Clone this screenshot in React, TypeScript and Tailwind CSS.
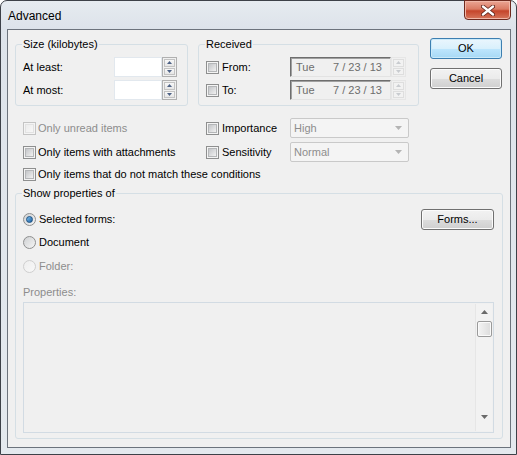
import clsx from "clsx";

const font = "font-['Liberation_Sans',Arial,sans-serif]";

function Check({ disabled }: { disabled?: boolean }) {
  return (
    <span
      className={clsx(
        "inline-block h-[13px] w-[13px] shrink-0 border p-[1px]",
        disabled ? "border-[#c4c4c4] bg-[#f4f4f4]" : "border-[#8e8f8f] bg-[#f4f4f4]"
      )}
    >
      <span
        className={clsx(
          "block h-full w-full border bg-gradient-to-br",
          disabled
            ? "border-[#e2e2e2] from-[#ececec] to-[#f7f7f7]"
            : "border-[#b4b6b8] from-[#c4c6c9] to-[#f1f1f1]"
        )}
      />
    </span>
  );
}

function Radio({ checked, disabled }: { checked?: boolean; disabled?: boolean }) {
  return (
    <span
      className={clsx(
        "flex h-[13px] w-[13px] shrink-0 items-center justify-center rounded-full border bg-gradient-to-br",
        disabled
          ? "border-[#cfcfcf] from-[#eeeeee] to-[#f8f8f8]"
          : "border-[#8e8f8f] from-[#cfd1d3] to-[#f5f5f5]"
      )}
    >
      {checked && (
        <span className="block h-[7px] w-[7px] rounded-full border border-[#1b4f80] bg-gradient-to-br from-[#7dc0ef] to-[#175fa0]" />
      )}
    </span>
  );
}

function Arrow({ up, color, size = 7 }: { up?: boolean; color: string; size?: number }) {
  const h = size === 7 ? 4 : 3;
  return (
    <svg width={size} height={h} viewBox={`0 0 ${size} ${h}`}>
      <path
        d={up ? `M0 ${h} L${size / 2} 0 L${size} ${h} Z` : `M0 0 L${size / 2} ${h} L${size} 0 Z`}
        fill={color}
      />
    </svg>
  );
}

function Spin({ disabled }: { disabled?: boolean }) {
  const c = disabled ? "#c8cbcf" : "#4d6185";
  const btn = clsx(
    "flex flex-1 items-center justify-center border",
    disabled
      ? "border-[#dedede] bg-[#f2f2f2]"
      : "border-[#c3c3c3] bg-gradient-to-b from-[#f8f8f8] to-[#e6e6e6]"
  );
  return (
    <div className={clsx("flex h-[20px] w-[15px] flex-col gap-[1px] border p-[1px]", disabled ? "border-[#e6e6e6]" : "border-[#b0b0b0]")}>
      <div className={btn}>
        <Arrow up color={c} size={5} />
      </div>
      <div className={btn}>
        <Arrow color={c} size={5} />
      </div>
    </div>
  );
}

function Group({ label, className, children }: { label: string; className: string; children: React.ReactNode }) {
  return (
    <div className={clsx("relative rounded-[3px] border border-[#d5dfe5]", className)}>
      <span className="absolute -top-[8px] left-[6px] bg-[#f0f0f0] px-[1px] text-[11px] leading-[14px] text-black">
        {label}
      </span>
      {children}
    </div>
  );
}

function Button({ label, primary, className }: { label: string; primary?: boolean; className?: string }) {
  return (
    <div
      className={clsx(
        "flex h-[21px] items-center justify-center rounded-[3px] border text-[11px] text-black",
        primary
          ? "border-[#3c7fb1] bg-[linear-gradient(#eaf6fd_0%,#d9f0fc_50%,#bee6fd_51%,#a7d9f5_100%)] shadow-[inset_0_0_0_1px_#cbeaf9]"
          : "border-[#707070] bg-[linear-gradient(#f2f2f2_0%,#ebebeb_50%,#dddddd_51%,#cfcfcf_100%)] shadow-[inset_0_0_0_1px_#fbfbfb]",
        className
      )}
    >
      {label}
    </div>
  );
}

function DateField() {
  return (
    <div className="flex items-center">
      <div className="flex h-[20px] w-[101px] items-center border border-b-[#e3e3e3] border-l-[#6e6e6e] border-r-[#e3e3e3] border-t-[#6e6e6e] bg-[#f0f0f0] pl-[5px] text-[11px] text-[#6d6d6d] shadow-[inset_1px_1px_0_#a0a0a0]">
        <span className="w-[37px]">Tue</span>
        <span>7 / 23 / 13</span>
      </div>
      <Spin disabled />
    </div>
  );
}

function Combo({ value }: { value: string }) {
  return (
    <div className="flex h-[20px] w-[119px] items-center justify-between rounded-[2px] border border-[#c9c9c9] bg-[#f4f4f4] pl-[3px] pr-[6px] text-[11px] text-[#8d8d8d]">
      <span>{value}</span>
      <Arrow color="#b4b4b4" />
    </div>
  );
}

export default function App() {
  return (
    <div className={clsx("h-[455px] w-[517px] bg-white", font)}>
      <div className="flex h-[455px] w-[517px] flex-col rounded-t-[7px] border border-[#3d4148] bg-[linear-gradient(180deg,#e6ebf0_0%,#dde3ea_6%,#e4e9ee_100%)]">
        <div className="flex h-[28px] items-start">
          <span className="ml-[7px] mt-[8px] text-[12px] leading-[14px] text-black">Advanced</span>
          <div className="-mt-[1px] ml-auto mr-[5px] flex h-[20px] w-[47px] items-center justify-center rounded-b-[4px] border border-[#6e2a1f] bg-[linear-gradient(#eba594_0%,#da7b64_45%,#c5452b_55%,#d6765c_100%)] shadow-[inset_0_0_0_1px_#f0b7a8]">
            <svg width="14" height="11" viewBox="0 0 14 11">
              <path d="M2 1.5 L12 9.5 M12 1.5 L2 9.5" stroke="#5a2118" strokeWidth="4" strokeLinecap="round" />
              <path d="M2 1.5 L12 9.5 M12 1.5 L2 9.5" stroke="#ffffff" strokeWidth="2.4" strokeLinecap="round" />
            </svg>
          </div>
        </div>
        <div className="ml-[6px] h-[419px] w-[504px] border border-[#6c737c] bg-[#f0f0f0] text-[11px] text-black">
          {/* top row */}
          <div className="flex items-start px-[7px] pt-[8px]">
            <Group label="Size (kilobytes)" className="mt-[6px] h-[62px] w-[173px]">
              <div className="pl-[7px] pt-[12px]">
                {["At least:", "At most:"].map((t, i) => (
                  <div key={t} className={clsx("flex h-[20px] items-center", i === 1 && "mt-[3px]")}>
                    <span className="w-[91px]">{t}</span>
                    <div className="h-[20px] w-[48px] border border-[#e2e8ee] bg-white" />
                    <Spin />
                  </div>
                ))}
              </div>
            </Group>
            <Group label="Received" className="ml-[10px] mt-[6px] h-[62px] w-[221px]">
              <div className="pl-[7px] pt-[12px]">
                {["From:", "To:"].map((t, i) => (
                  <div key={t} className={clsx("flex h-[20px] items-center", i === 1 && "mt-[3px]")}>
                    <Check />
                    <span className="ml-[3px] w-[68px]">{t}</span>
                    <DateField />
                  </div>
                ))}
              </div>
            </Group>
            <div className="ml-[11px] flex w-[72px] flex-col">
              <Button label="OK" primary />
              <Button label="Cancel" className="mt-[9px]" />
            </div>
          </div>

          {/* filters */}
          <div className="mt-[12px] pl-[15px]">
            <div className="flex h-[20px] items-center">
              <div className="flex w-[183px] items-center">
                <Check disabled />
                <span className="ml-[2px] text-[#8d8d8d]">Only unread items</span>
              </div>
              <Check />
              <span className="ml-[3px] w-[68px]">Importance</span>
              <Combo value="High" />
            </div>
            <div className="mt-[4px] flex h-[20px] items-center">
              <div className="flex w-[183px] items-center">
                <Check />
                <span className="ml-[2px]">Only items with attachments</span>
              </div>
              <Check />
              <span className="ml-[3px] w-[68px]">Sensitivity</span>
              <Combo value="Normal" />
            </div>
            <div className="mt-[2px] flex h-[20px] items-center">
              <Check />
              <span className="ml-[2px]">Only items that do not match these conditions</span>
            </div>
          </div>

          {/* show properties */}
          <Group label="Show properties of" className="ml-[7px] mt-[9px] h-[246px] w-[488px]">
            <div className="pl-[7px] pr-[8px] pt-[15px]">
              <div className="flex h-[20px] items-center">
                <Radio checked />
                <span className="ml-[3px]">Selected forms:</span>
                <Button label="Forms..." className="ml-auto w-[73px]" />
              </div>
              <div className="mt-[3px] flex h-[20px] items-center">
                <Radio />
                <span className="ml-[3px]">Document</span>
              </div>
              <div className="mt-[4px] flex h-[20px] items-center">
                <Radio disabled />
                <span className="ml-[3px] text-[#8d8d8d]">Folder:</span>
              </div>
              <div className="mt-[9px] h-[14px] leading-[14px] text-[#8d8d8d]">Properties:</div>
              <div className="mt-[3px] flex h-[131px] w-[471px] justify-end border border-[#d2dbe3] bg-[#f0f0f0] p-[1px]">
                <div className="flex w-[17px] flex-col items-center border-l border-[#e6e6e6] bg-[#f2f2f2]">
                  <div className="mt-[6px]">
                    <Arrow up color="#6a6a6a" />
                  </div>
                  <div className="mt-[7px] h-[16px] w-[15px] rounded-[2px] border border-[#9a9a9a] bg-gradient-to-r from-[#f4f4f4] to-[#dcdcdc] shadow-[inset_0_0_0_1px_#fafafa]" />
                  <div className="mb-[12px] mt-auto">
                    <Arrow color="#6a6a6a" />
                  </div>
                </div>
              </div>
            </div>
          </Group>
        </div>
      </div>
    </div>
  );
}
